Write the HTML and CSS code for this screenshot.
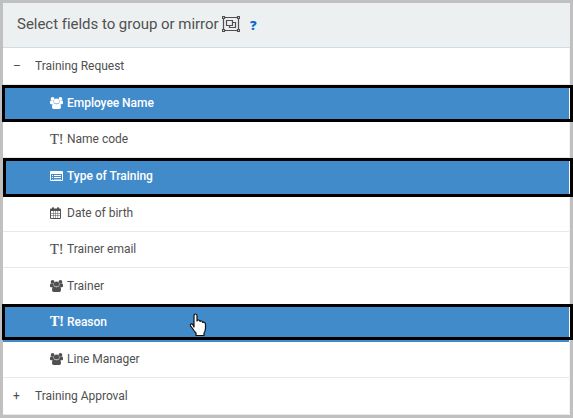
FILE: index.html
```html
<!DOCTYPE html>
<html lang="en">
<head>
<meta charset="utf-8">
<title>Select fields</title>
<link rel="stylesheet" href="styles.css">
</head>
<body>
<svg class="defs" aria-hidden="true">
  <symbol id="users" viewBox="0 0 13 12">
    <circle cx="2.6" cy="1.900" r="1.9"/><circle cx="10.4" cy="1.900" r="1.9"/>
    <circle cx="6.5" cy="4" r="2.6"/>
    <path d="M0 6.300V5Q0 3.200 1.200 3.500Q2.400 4.100 3.500 3.700Q3.400 5.500 4.300 6.300Q3 6.400 2.600 7.300H1Q0 7.300 0 6.300ZM13 6.300V5Q13 3.200 11.800 3.500Q10.600 4.100 9.500 3.700Q9.600 5.500 8.700 6.300Q10 6.400 10.400 7.300H12Q13 7.300 13 6.300ZM4.200 6.300Q6.500 8 8.800 6.300Q11 6.400 11 10.200Q11 12 9.300 12H3.700Q2 12 2 10.200Q2 6.400 4.200 6.300Z"/>
  </symbol>
  <symbol id="list" viewBox="0 0 13 12">
    <path fill-rule="evenodd" d="M1 1H12Q13 1 13 2V10Q13 11 12 11H1Q0 11 0 10V2Q0 1 1 1ZM1 4V10H12V4ZM2 5H3V6H2ZM4 5H11V6H4ZM2 7H3V8H2ZM4 7H11V8H4ZM2 9H3V9.500H2ZM4 9H11V9.500H4Z"/>
  </symbol>
  <symbol id="calendar" viewBox="0 0 13 12">
    <path fill-rule="evenodd" d="M2 1.5Q2 0 3 0T4 1.5H7Q7 0 8 0T9 1.500H10Q11 1.5 11 2.5V11Q11 12 10 12H1Q0 12 0 11V2.5Q0 1.5 1 1.5ZM1 4V6H3V4ZM3.500 4V6H5.300V4ZM5.800 4V6H7.600V4ZM8.100 4V6H10V4ZM1 6.500V8.500H3V6.500ZM3.500 6.500V8.500H5.300V6.500ZM5.800 6.500V8.500H7.600V6.500ZM8.100 6.500V8.500H10V6.500ZM1 9V11H3V9ZM3.500 9V11H5.300V9ZM5.800 9V11H7.600V9ZM8.100 9V11H10V9Z"/>
  </symbol>
</svg>
<main class="panel">
  <header class="head">
    <h1 class="title">Select fields to group or mirror</h1>
    <svg class="group-icon" viewBox="0 0 18 16"><path d="M2.5 1.5H15.5M2.5 14.5H15.5M1.5 2.5V13.5M16.5 2.5V13.5M4.5 4.5H10.500V9.5H4.5ZM10.5 6.5H13.500V11.5H7.500V9.5M.5 .5H2.5V2.5H.5ZM15.5 .5H17.5V2.5H15.5ZM.5 13.5H2.5V15.5H.5ZM15.5 13.5H17.5V15.5H15.5Z"/></svg>
    <span class="help">?</span>
  </header>
  <div class="rows">
    <div class="row parent"><span class="toggle">–</span><span class="label">Training Request</span></div>
    <div class="row selected"><svg class="icon"><use href="#users"/></svg><span class="label">Employee Name</span></div>
    <div class="row"><span class="icon text-icon">T!</span><span class="label">Name code</span></div>
    <div class="row selected second"><svg class="icon"><use href="#list"/></svg><span class="label">Type of Training</span></div>
    <div class="row"><svg class="icon"><use href="#calendar"/></svg><span class="label">Date of birth</span></div>
    <div class="row"><span class="icon text-icon">T!</span><span class="label">Trainer email</span></div>
    <div class="row"><svg class="icon"><use href="#users"/></svg><span class="label">Trainer</span></div>
    <div class="row selected third"><span class="icon text-icon">T!</span><span class="label">Reason</span>
      <svg class="cursor" viewBox="0 0 18 24"><path d="M5 14V2.7Q5 1 6.5 1T8 2.7V8Q8.300 7 9.500 7T11 8.500Q11.300 7.800 12.500 8T13.700 9.500Q14.200 9 15.200 9.300T16.500 11V15Q16.500 18 15 20V22.500H7V20Q5 18 3.500 15.500L1.500 12.800Q1 11.500 2 11T4 12Z"/></svg>
    </div>
    <div class="row"><svg class="icon"><use href="#users"/></svg><span class="label">Line Manager</span></div>
    <div class="row parent"><span class="toggle plus">+</span><span class="label">Training Approval</span></div>
  </div>
</main>
</body>
</html>
```
FILE: styles.css
```css
*, *::after { box-sizing: border-box; }
body { margin: 0; background: #c0c0c0; font-family: Roboto, sans-serif; color: #505050; overflow: hidden; }
.defs { position: absolute; width: 0; height: 0; }
.panel { height: 418px; padding: 3px; display: grid; grid-template-rows: 45px 367px; }
.head { display: flex; align-items: center; padding: 0 14px 2px; background: #ecf0f1; border-bottom: 1px solid #d0dce6; }
.title { margin: 0; width: 205px; font-size: 15px; font-weight: 400; line-height: 20px; letter-spacing: -.03px; white-space: nowrap; }
.group-icon { width: 18px; height: 16px; fill: none; stroke: #505050; stroke-width: 1.2; }
.help { margin-left: 10px; padding-top: 2px; font: 800 13px/18px "Open Sans", sans-serif; color: #0b68d0; }
.rows { display: grid; grid-template-rows: repeat(10, 1fr); background: #fff; border-right: 1px solid #f4f4f4; }
.row { position: relative; display: flex; align-items: center; min-height: 0; padding-left: 47px; border-bottom: 1px solid #e5e9ea; font-size: 12px; line-height: 16px; }
.parent { padding-left: 10px; }
.toggle { width: 22px; font-size: 12px; }
.plus { font-weight: 400; }
.icon { flex: none; width: 13px; height: 12px; margin-right: 4px; fill: currentColor; }
.text-icon { font: 14.5px/12px "Liberation Serif", serif; letter-spacing: -.2px; -webkit-text-stroke: .15px; white-space: nowrap; }
.label { white-space: nowrap; }
.parent .label { letter-spacing: -.02px; }
.selected { z-index: 1; background: #428bca; border-bottom-color: #428bca; color: #fff; }
.selected .label { font-weight: 500; letter-spacing: -.03px; }
.selected::after { content: ""; position: absolute; top: 0; left: -1px; right: -4px; height: 37px; border: 3px solid #000; }
.second::after { left: 0; height: 39px; }
.third { padding-bottom: 1px; }
.third::after { top: -1px; height: 36px; }
.selected .text-icon { font-weight: 700; font-size: 14px; }
.cursor { position: absolute; z-index: 2; left: 186px; top: 8px; width: 18px; height: 24px; fill: #fff; stroke: #111; stroke-width: 1.2; stroke-linejoin: round; }
```
